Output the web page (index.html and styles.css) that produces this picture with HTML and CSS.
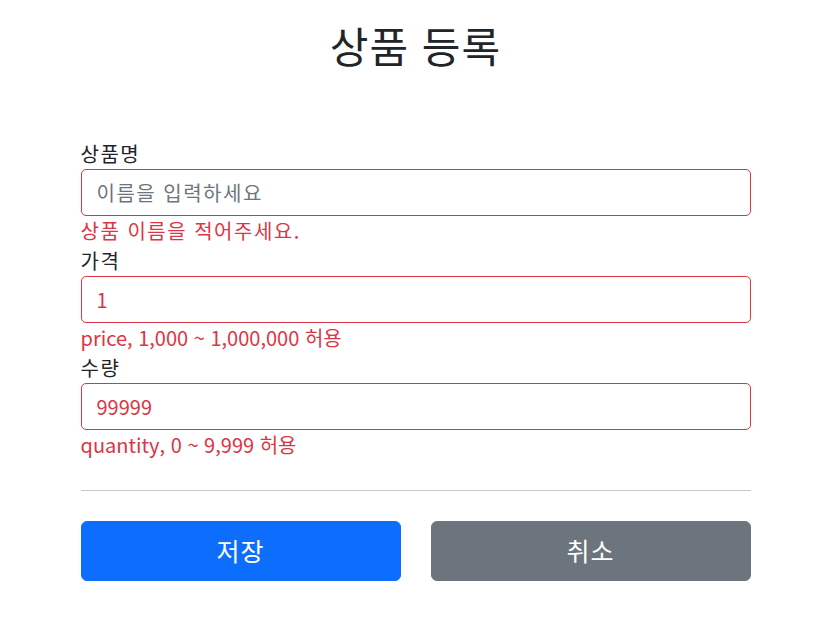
FILE: index.html
```html
<!DOCTYPE html>
<html lang="ko">
  <head>
    <meta charset="UTF-8" />
    <meta name="viewport" content="width=device-width, initial-scale=1.0" />
    <title>상품 등록</title>
    <link rel="stylesheet" href="styles.css">
  </head>
  <body>
    <div class="container">
      <div class="page-title">
        <h2>상품 등록</h2>
      </div>

      <form action="" method="post">
        <div>
          <label for="itemName">상품명</label>
          <input type="text" id="itemName" name="itemName" class="form-control field-error ko" placeholder="이름을 입력하세요" />
          <div class="field-error ko">상품 이름을 적어주세요.</div>
        </div>
        <div>
          <label for="price">가격</label>
          <input type="text" id="price" name="price" class="form-control field-error" value="1" />
          <div class="field-error">price, 1,000 ~ 1,000,000 허용</div>
        </div>
        <div>
          <label for="quantity">수량</label>
          <input type="text" id="quantity" name="quantity" class="form-control field-error" value="99999" />
          <div class="field-error">quantity, 0 ~ 9,999 허용</div>
        </div>

        <hr class="divider" />

        <div class="row">
          <div class="col">
            <button class="btn btn-primary" type="submit">저장</button>
          </div>
          <div class="col">
            <button class="btn btn-secondary" type="button">취소</button>
          </div>
        </div>
      </form>
    </div>
  </body>
</html>
```

FILE: styles.css
```css
* {
  box-sizing: border-box;
}

body {
  margin: 0;
  font-family: "Noto Sans CJK KR", "Noto Sans", sans-serif;
  font-size: 20px;
  line-height: 30px;
  color: #212529;
  background-color: #fff;
}

.container {
  max-width: 700px;
  margin: 0 auto;
  padding: 0 15px;
}

.page-title {
  text-align: center;
  padding: 21px 0 60px;
}

.page-title h2 {
  margin: 0 0 10px;
  font-size: 42px;
  font-weight: 400;
  letter-spacing: 1px;
  line-height: 48px;
}

label {
  display: inline-block;
  letter-spacing: 1.5px;
}

.ko {
  letter-spacing: 1.5px;
}

.form-control {
  display: block;
  width: 100%;
  height: 47px;
  padding: 7px 15px;
  font-family: inherit;
  font-size: 20px;
  line-height: 30px;
  color: #212529;
  background-color: #fff;
  border: 1px solid #ced4da;
  border-radius: 5px;
  outline: none;
}

.form-control::placeholder {
  color: #6c757d;
}

.field-error {
  border-color: #dc3545;
  color: #dc3545;
}

.divider {
  margin: 30px 0;
  border: 0;
  border-top: 1px solid #c8c9ca;
}

.row {
  display: flex;
  gap: 30px;
}

.col {
  flex: 1;
}

.btn {
  display: block;
  width: 100%;
  height: 60px;
  padding: 10px 20px;
  font-family: inherit;
  font-size: 25px;
  line-height: 37.5px;
  letter-spacing: 1px;
  color: #fff;
  border: 1px solid transparent;
  border-radius: 6px;
  cursor: pointer;
}

.btn-primary {
  background-color: #0d6efd;
  border-color: #0d6efd;
}

.btn-secondary {
  background-color: #6c757d;
  border-color: #6c757d;
}
```
